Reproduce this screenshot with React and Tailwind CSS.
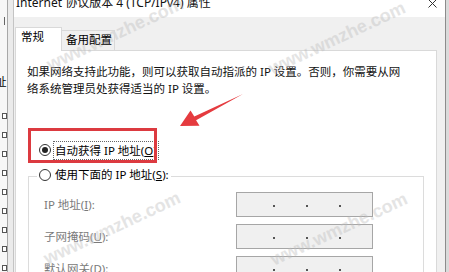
export default function App() {
  const icons = [0, 1, 2, 3, 4, 5, 6, 7, 8];
  const marks = [
    { l: "left-[115px]", t: "top-[34px]" },
    { l: "left-[337px]", t: "top-[38px]" },
    { l: "left-[112px]", t: "top-[228px]" },
    { l: "left-[339px]", t: "top-[229px]" },
  ];
  return (
    <div className="relative w-[449px] h-[272px] overflow-hidden flex bg-[#f0f0f0] font-['Noto_Sans','Noto_Sans_CJK_SC',sans-serif] text-black">
      {/* background window strip */}
      <div className="w-[13px] shrink-0 flex bg-[#ebebeb]">
        <div className="w-[8px] shrink-0 border-r border-[#a8a8a8] bg-[#f7f7f7] flex flex-col overflow-hidden">
          <div className="ml-[4px] mt-[17px] w-[1px] h-[8px] bg-[#666]" />
          <div className="-ml-[5px] mt-[50px] text-[11.5px] leading-[14px] whitespace-nowrap">址</div>
          <div className="mt-[24px] flex flex-col gap-[13px]">
            {icons.map((i) => (
              <div key={i} className="ml-[2px] w-[5px] h-[6px] border border-[#555] bg-white" />
            ))}
          </div>
        </div>
      </div>

      {/* dialog */}
      <div className="w-[433px] shrink-0 flex flex-col border-l border-r border-l-[#c4c4c4] border-r-[#8c8c8c]">
        <div className="h-[17px] shrink-0 bg-white flex items-start justify-between pl-[2px] pr-[8px] overflow-hidden">
          <div className="-mt-[5px] text-[12px] leading-[16px] whitespace-nowrap text-[#111]">
            Internet 协议版本 4 (TCP/IPv4) 属性
          </div>
          <svg width="9" height="9" className="-mt-[1px]">
            <path d="M0.5 0.5 L8.5 8.5 M8.5 0.5 L0.5 8.5" stroke="#333" strokeWidth="1" fill="none" />
          </svg>
        </div>

        <div className="flex-1 flex flex-col pt-[10px] pl-[1px] pr-[8px] text-[11.5px]">
          <div className="flex items-start h-[24px] shrink-0 relative z-10">
            <div className="w-[47px] h-[24px] bg-white border border-b-0 border-[#d9d9d9] pl-[5px] leading-[18px]">常规</div>
            <div className="mt-[3px] w-[53px] h-[20px] border-t border-r border-[#d9d9d9] pl-[4px] leading-[18px]">备用配置</div>
          </div>

          <div className="-mt-[1px] flex-1 flex flex-col bg-white border border-[#d9d9d9]">
            <p className="pl-[11px] mt-[12px] leading-[17px] whitespace-nowrap text-[#111]">
              如果网络支持此功能，则可以获取自动指派的 IP 设置。否则，你需要从网
              <br />
              络系统管理员处获得适当的 IP 设置。
            </p>

            <div className="relative mt-[43px] ml-[23px] h-[20px] flex items-center">
              <div className="w-[12px] h-[12px] rounded-full border border-[#333] bg-white flex items-center justify-center">
                <div className="w-[6px] h-[6px] rounded-full bg-[#222]" />
              </div>
              <div className="ml-[2px] h-[19px] border border-dotted border-[#666] px-[1px] leading-[17px] whitespace-nowrap">
                自动获得 IP 地址(<span className="underline">O</span>)
              </div>
              <div className="absolute -left-[11px] -top-[12px] w-[129px] h-[35px] border-[3px] border-[#dc3a40]" />
            </div>

            <div className="mt-[16px] ml-[12px] w-[396px] flex-1 border border-b-0 border-[#dcdcdc] flex flex-col">
              <div className="-mt-[11px] ml-[8px] h-[18px] w-fit bg-white pl-[2px] pr-[2px] flex items-center">
                <div className="w-[12px] h-[12px] rounded-full border border-[#333] bg-white" />
                <div className="ml-[4px] leading-[18px] whitespace-nowrap">
                  使用下面的 IP 地址(<span className="underline">S</span>):
                </div>
              </div>

              <div className="mt-[8px] flex flex-col gap-[7px] pl-[15px] text-[#7a7a7a]">
                {[
                  ["IP 地址(", "I", "):"],
                  ["子网掩码(", "U", "):"],
                  ["默认网关(", "D", "):"],
                ].map(([a, b, c]) => (
                  <div key={b} className="flex items-center h-[25px]">
                    <div className="w-[192px] whitespace-nowrap leading-[18px]">
                      {a}
                      <span className="underline">{b}</span>
                      {c}
                    </div>
                    <div className="w-[137px] h-[25px] bg-[#f0f0f0] border border-[#a6a6a6] flex items-center pl-[36px] gap-[31px] pt-[3px]">
                      <span className="w-[2px] h-[2px] bg-[#555]" />
                      <span className="w-[2px] h-[2px] bg-[#555]" />
                      <span className="w-[2px] h-[2px] bg-[#555]" />
                    </div>
                  </div>
                ))}
              </div>
            </div>
          </div>
        </div>
      </div>

      <div className="w-[3px] shrink-0 bg-[#dadada]" />

      {/* red arrow annotation */}
      <svg className="absolute left-0 top-0 pointer-events-none" width="449" height="272">
        <polygon
          points="243,94 194.3,116.6 190.5,110.5 180,126 199.5,125.8 196.1,120.2"
          fill="#e53b3f"
        />
      </svg>

      {/* watermarks */}
      {marks.map((m, i) => (
        <div
          key={i}
          className={`absolute ${m.l} ${m.t} -translate-x-1/2 -translate-y-1/2 rotate-[-25deg] pointer-events-none whitespace-nowrap font-['Liberation_Sans',sans-serif] font-bold text-[18px] leading-[20px] text-[#bdbdbd] opacity-40`}
        >
          www.wmzhe.com
        </div>
      ))}
    </div>
  );
}
